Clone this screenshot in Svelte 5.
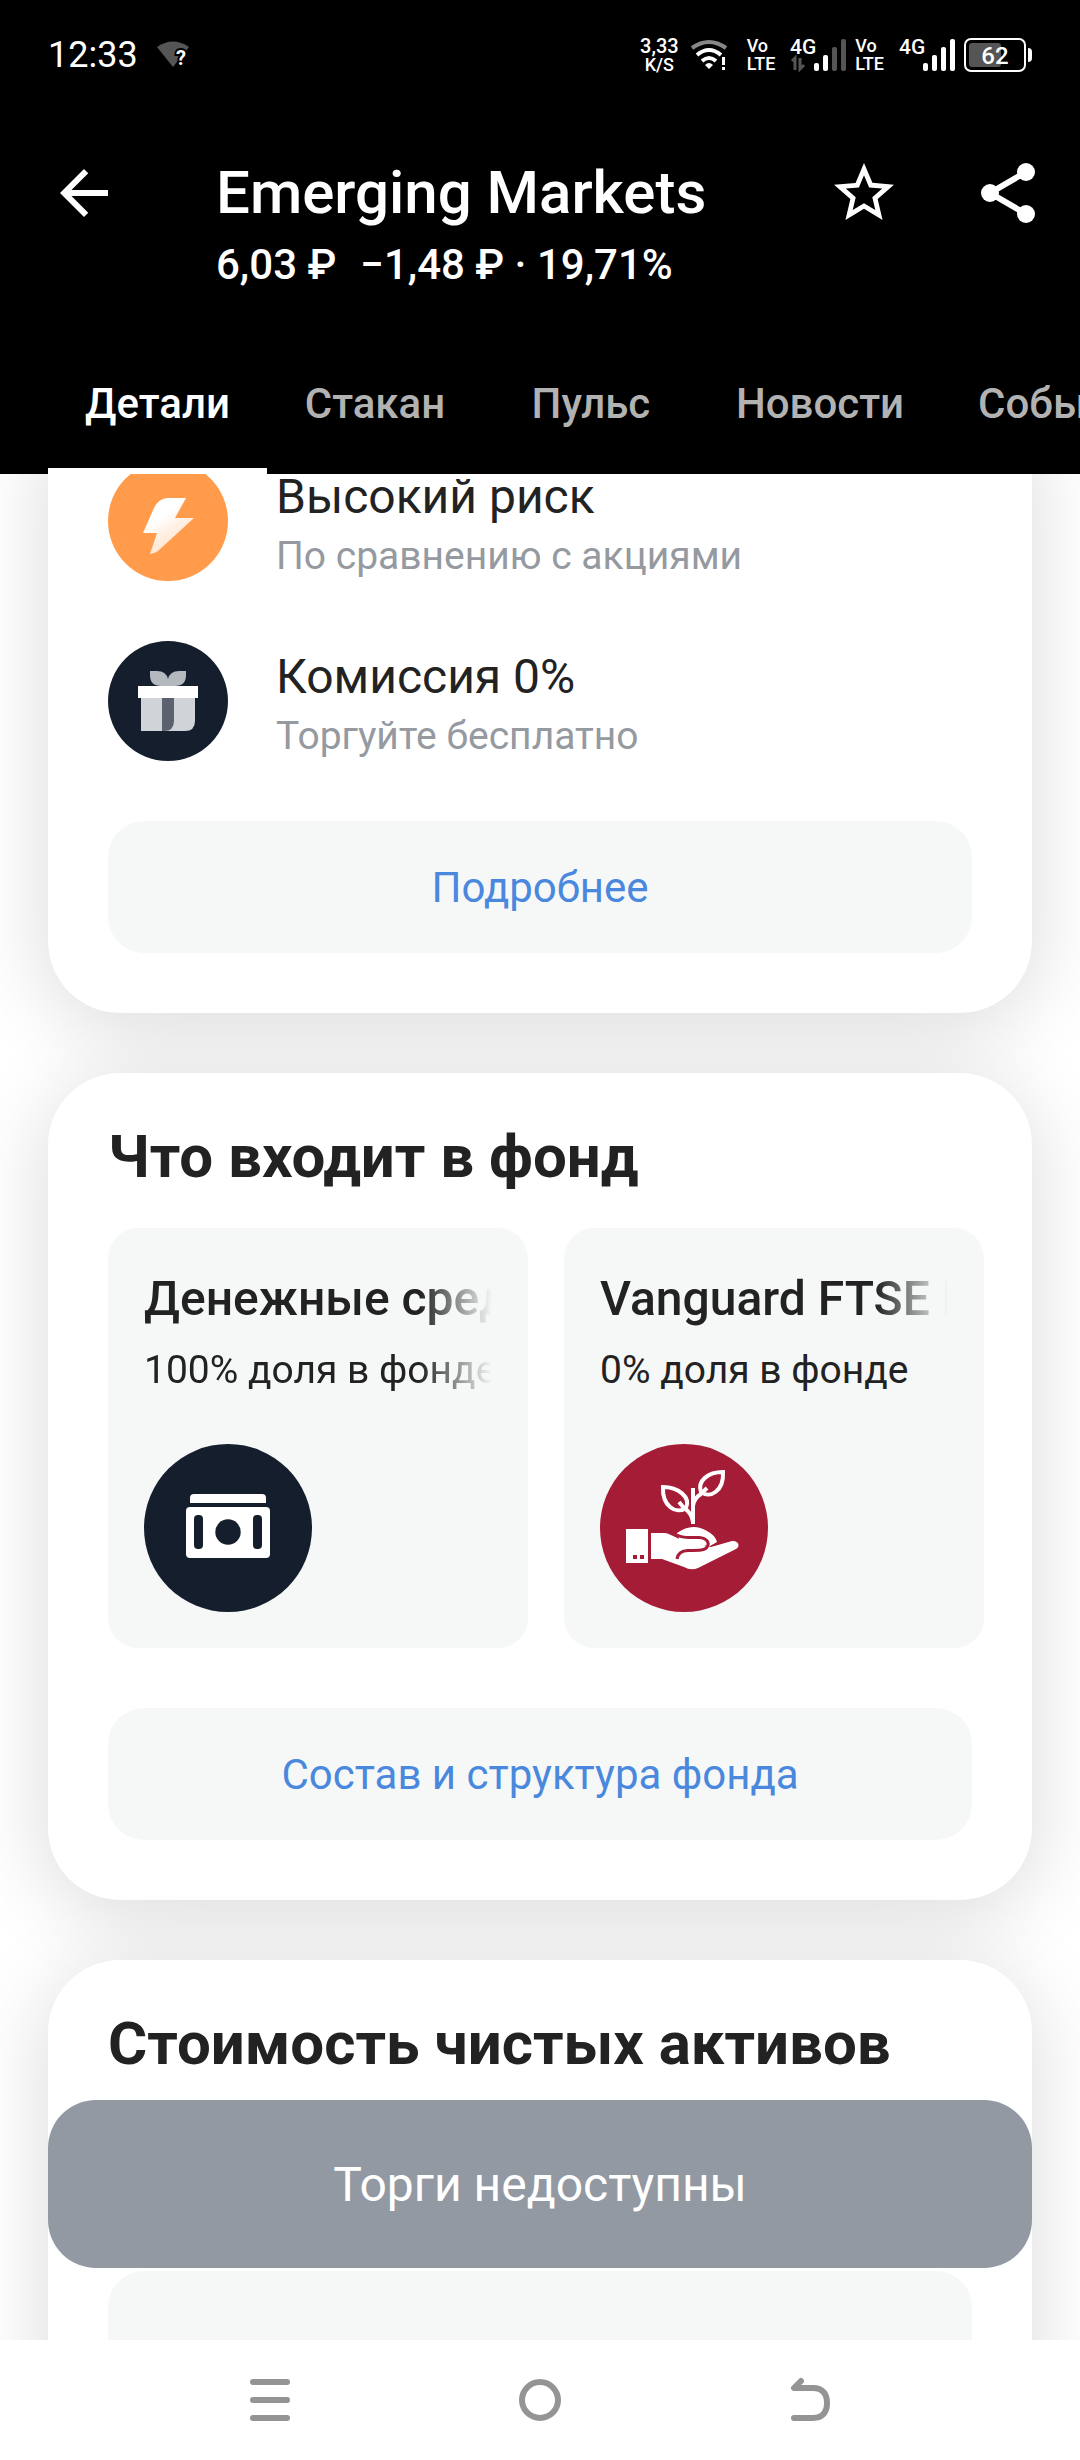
<script lang="ts">
    let activeTab = 'Детали';

    const tabs = ['Детали', 'Стакан', 'Пульс', 'Новости', 'События'];

    const assets = [
        { name: 'Денежные средства', share: '100% доля в фонде', longShare: true, icon: 'cash' },
        { name: 'Vanguard FTSE ETF', share: '0% доля в фонде', longShare: false, icon: 'plant' }
    ];

    // active bars out of four for each SIM card
    const sims = [
        { level: 2, data: true },
        { level: 4, data: false }
    ];
    const bars = [0, 1, 2, 3];
</script>

<div class="screen">
    <header>
        <div class="status-bar">
            <div class="status-left">
                <span class="clock">12:33</span>
                <svg width="34" height="28" viewBox="0 0 34 28" aria-hidden="true">
                    <path d="M0 6Q16 -5 32 6L16 26z" fill="#555" />
                    <text x="19" y="24" class="mark">?</text>
                </svg>
            </div>
            <div class="status-right">
                <div class="speed"><b>3,33</b><span>K/S</span></div>
                <svg width="50" height="36" viewBox="0 0 50 36" fill="none" stroke="#fff" stroke-width="4" aria-hidden="true">
                    <path d="M4 11Q21 -1 38 11" stroke="#888" />
                    <path d="M9 18Q21 8 33 18" />
                    <path d="M14 24Q21 18 28 24" />
                    <path d="M17 28Q21 24 25 28L21 32z" fill="#fff" stroke="none" />
                    <path d="M35.500 20V28M35.500 30V33" stroke-width="3" />
                </svg>
                {#each sims as sim}
                    <div class="volte"><span>Vo</span><span>LTE</span></div>
                    <svg width="62" height="36" viewBox="0 0 62 36" aria-hidden="true">
                        <text x="6" y="17" class="network">4G</text>
                        {#if sim.data}
                            <path d="M8 24L11 21V33M16 21V32L20 28" fill="none" stroke="#555" stroke-width="3" />
                        {/if}
                        {#each bars as i}
                            <rect
                                x={30 + i * 9}
                                y={26 - i * 8}
                                width="5"
                                height={8 + i * 8}
                                rx="2"
                                fill={i < sim.level ? '#fff' : '#555'}
                            />
                        {/each}
                    </svg>
                {/each}
                <svg width="68" height="36" viewBox="0 0 68 36" aria-hidden="true">
                    <rect x="1" y="2" width="60" height="32" rx="6" fill="none" stroke="#fff" stroke-width="2" />
                    <rect x="5" y="6" width="32" height="24" rx="3" fill="#555" />
                    <path d="M64 11Q68 11 68 15V21Q68 25 64 25z" fill="#fff" />
                    <text x="31" y="27" class="charge">62</text>
                </svg>
            </div>
        </div>

        <div class="toolbar">
            <button class="icon-button" aria-label="Назад">
                <svg viewBox="0 0 24 24"><path d="M20 11H7.830l5.590-5.590L12 4l-8 8 8 8 1.410-1.410L7.830 13H20z" /></svg>
            </button>
            <div class="title">
                <h1>Emerging Markets</h1>
                <p><span>6,03 ₽</span><span>−1,48 ₽ · 19,71%</span></p>
            </div>
            <div class="actions">
                <button class="icon-button" aria-label="В избранное">
                    <svg viewBox="0 0 24 24"><path d="M22 9.240l-7.190-.620L12 2 9.190 8.630 2 9.240l5.460 4.730L5.820 21 12 17.270 18.180 21l-1.630-7.030zM12 15.400l-3.760 2.270 1-4.280-3.320-2.880 4.380-.380L12 6.100l1.710 4.040 4.380.380-3.320 2.880 1 4.280z" /></svg>
                </button>
                <button class="icon-button" aria-label="Поделиться">
                    <svg viewBox="0 0 24 24">
                        <path d="M18 5L6 12L18 19" fill="none" stroke="#fff" stroke-width="2" />
                        <circle cx="18" cy="5" r="3" />
                        <circle cx="6" cy="12" r="3" />
                        <circle cx="18" cy="19" r="3" />
                    </svg>
                </button>
            </div>
        </div>

        <nav class="tabs">
            {#each tabs as tab}
                <button class:active={tab === activeTab} on:click={() => (activeTab = tab)}>{tab}</button>
            {/each}
        </nav>
    </header>

    <main>
        <div class="feed">
            <section class="card features">
                <div class="feature">
                    <svg class="round" viewBox="0 0 120 120" aria-hidden="true">
                        <defs>
                            <linearGradient id="bolt" x1="0" y1="0" x2="0.600" y2="1">
                                <stop offset="0.400" stop-color="#fff" />
                                <stop offset="1" stop-color="#ffdcc0" />
                            </linearGradient>
                        </defs>
                        <circle cx="60" cy="60" r="60" fill="#ff9b4a" />
                        <path d="M59 37H78L67 57H86L50 90Q46 93 42 93L49 72H35L46 47Q50 38 59 37z" fill="url(#bolt)" />
                    </svg>
                    <div class="feature-text">
                        <h3>Высокий риск</h3>
                        <p>По сравнению с акциями</p>
                    </div>
                </div>
                <div class="feature">
                    <svg class="round" viewBox="0 0 120 120" aria-hidden="true">
                        <circle cx="60" cy="60" r="60" fill="#151e2c" />
                        <path d="M42 30H49Q58 30 60 38Q62 30 71 30H78V34Q78 45 67 45H53Q42 45 42 34z" fill="#b4b8bf" />
                        <path d="M33 57H87V80Q87 90 77 90H33z" fill="#d0d3d7" />
                        <path d="M54 57H66V80Q66 90 56 90H54z" fill="#5b616d" />
                        <rect x="30" y="45" width="60" height="12" fill="#fff" />
                    </svg>
                    <div class="feature-text">
                        <h3>Комиссия 0%</h3>
                        <p>Торгуйте бесплатно</p>
                    </div>
                </div>
                <button class="more">Подробнее</button>
            </section>

            <section class="card">
                <h2>Что входит в фонд</h2>
                <div class="assets">
                    {#each assets as asset}
                        <article class="asset">
                            <h3 class="fade">{asset.name}</h3>
                            <p class:fade={asset.longShare}>{asset.share}</p>
                            {#if asset.icon === 'cash'}
                                <svg viewBox="0 0 168 168" aria-hidden="true">
                                    <circle cx="84" cy="84" r="84" fill="#151e2c" />
                                    <path d="M46 59V54Q46 50 50 50H118Q122 50 122 54V59z" fill="#fff" />
                                    <rect x="42" y="63" width="84" height="51" rx="4" fill="#fff" />
                                    <circle cx="84" cy="88" r="12.700" fill="#151e2c" />
                                    <rect x="50" y="71" width="9" height="34" rx="4" fill="#151e2c" />
                                    <rect x="109" y="71" width="9" height="34" rx="4" fill="#151e2c" />
                                </svg>
                            {:else}
                                <svg viewBox="0 0 168 168" aria-hidden="true">
                                    <circle cx="84" cy="84" r="84" fill="#a51c36" />
                                    <g fill="none" stroke="#fff" stroke-width="4">
                                        <path d="M93 44V80" />
                                        <path d="M63 43C78 43 91 53 86 64C76 71 62 62 63 43z" />
                                        <path d="M79 58L84 64Q92 69 93 78" />
                                        <path d="M123 28C108 28 97 37 101 48C110 55 124 47 123 28z" />
                                        <path d="M107 44L101 50Q94 54 93 62" />
                                    </g>
                                    <path d="M77 89Q92 78 107 87Q115 91 117 98L110 102L80 98z" fill="#fff" />
                                    <path d="M51 89H65C72 90 76 95 84 96L111 103L132 97C138 96 141 102 136 105L98 124Q91 127 84 123L62 115H51z" fill="#fff" />
                                    <path d="M77 91C84 95 90 93 99 93.500C107 94 110 99 107 103C105 106.500 100 106.500 88 106.500Q78 107 77 115" fill="none" stroke="#a51c36" stroke-width="3" />
                                    <rect x="26" y="85" width="22" height="34" fill="#fff" />
                                    <path d="M33 111h4v4h-4zM40 111h4v4h-4z" fill="#a51c36" />
                                </svg>
                            {/if}
                        </article>
                    {/each}
                </div>
                <button class="more">Состав и структура фонда</button>
            </section>

            <section class="card">
                <h2>Стоимость чистых активов</h2>
                <div class="value"></div>
                <div class="chart"></div>
            </section>
        </div>

        <button class="trade" disabled>Торги недоступны</button>
    </main>

    <footer>
        <button aria-label="Недавние">
            <svg viewBox="0 0 48 48"><path d="M7 6H41M7 24H41M7 42H41" /></svg>
        </button>
        <button aria-label="Домой">
            <svg viewBox="0 0 48 48"><circle cx="24" cy="24" r="18" /></svg>
        </button>
        <button aria-label="Назад">
            <svg viewBox="0 0 48 48"><path d="M15 5L8 12H27C37 12 41 18 41 27C41 36 37 42 27 42H8" /></svg>
        </button>
    </footer>
</div>

<style>
    :global(body) {
        margin: 0;
        background: #fff;
    }

    .screen {
        display: flex;
        flex-direction: column;
        height: 100vh;
        overflow: hidden;
        font-family: Roboto, "Liberation Sans", sans-serif;
        color: #222;
    }

    h1, h2, h3, p {
        margin: 0;
    }

    button {
        padding: 0;
        border: none;
        background: none;
        font-family: inherit;
        cursor: pointer;
    }

    header {
        flex: none;
        background: #000;
        color: #fff;
    }

    .status-bar {
        display: flex;
        justify-content: space-between;
        align-items: center;
        height: 109px;
        padding: 0 48px;
    }

    .status-bar svg {
        overflow: visible;
    }

    .status-left {
        display: flex;
        align-items: center;
        gap: 19px;
    }

    .clock {
        font-size: 36px;
        line-height: 44px;
    }

    .status-right {
        display: flex;
        align-items: center;
        gap: 9px;
    }

    .speed,
    .volte {
        display: flex;
        flex-direction: column;
        align-items: center;
        font-size: 18px;
        font-weight: 500;
        line-height: 18px;
    }

    .speed b {
        font-size: 20px;
        font-weight: 500;
        line-height: 20px;
    }

    .volte {
        align-items: flex-start;
    }

    .mark {
        fill: #fff;
        stroke: #000;
        stroke-width: 4px;
        paint-order: stroke;
        font-size: 20px;
        font-weight: 700;
    }

    .network {
        fill: #fff;
        font-size: 21px;
        font-weight: 500;
    }

    .charge {
        fill: #fff;
        font-size: 24px;
        font-weight: 500;
        text-anchor: middle;
    }

    .toolbar {
        display: flex;
        align-items: flex-start;
        padding: 48px 36px 43px 48px;
    }

    .icon-button {
        flex: none;
        width: 72px;
        height: 72px;
    }

    .icon-button svg {
        display: block;
        fill: #fff;
    }

    .title {
        flex: 1;
        margin-left: 96px;
    }

    .title h1 {
        font-size: 60px;
        font-weight: 500;
        line-height: 72px;
    }

    .title p {
        display: flex;
        gap: 24px;
        margin-top: 12px;
        font-size: 42px;
        font-weight: 500;
        line-height: 48px;
    }

    .actions {
        display: flex;
        gap: 72px;
    }

    .tabs {
        display: flex;
        height: 142px;
        padding-left: 48px;
        overflow: hidden;
    }

    .tabs button {
        flex: none;
        min-width: 216px;
        padding: 0 37px;
        border: solid transparent;
        border-width: 6px 0;
        color: #b2b2b2;
        font-size: 42px;
        font-weight: 500;
    }

    .tabs button.active {
        border-bottom-color: #fff;
        color: #fff;
    }

    main {
        position: relative;
        flex: 1;
        min-height: 0;
        overflow: hidden;
    }

    /* the feed is scrolled a little, so the first card starts under the header */
    .feed {
        display: flex;
        flex-direction: column;
        gap: 60px;
        margin-top: -73px;
        padding: 0 48px;
    }

    .card {
        padding: 48px 60px 60px;
        border-radius: 72px;
        background: #fff;
        box-shadow: 0 12px 84px rgba(0, 0, 0, 0.15);
    }

    .features {
        display: flex;
        flex-direction: column;
        gap: 60px;
        padding-top: 60px;
    }

    .feature {
        display: flex;
        gap: 48px;
    }

    .round {
        flex: none;
        width: 120px;
        height: 120px;
    }

    .feature-text {
        padding-top: 6px;
    }

    .feature-text h3 {
        font-size: 48px;
        font-weight: 400;
        line-height: 60px;
    }

    .feature-text p {
        margin-top: 5px;
        color: #9599a0;
        font-size: 39px;
        line-height: 48px;
    }

    .more {
        display: block;
        width: 100%;
        height: 132px;
        border-radius: 36px;
        background: #f6f8f8;
        color: #4a88dd;
        font-size: 42px;
    }

    .card h2 {
        font-size: 60px;
        font-weight: 700;
        line-height: 71px;
    }

    .assets {
        display: flex;
        gap: 36px;
        margin: 36px -60px 60px 0;
        overflow: hidden;
    }

    .asset {
        display: flex;
        flex: none;
        flex-direction: column;
        box-sizing: border-box;
        width: 420px;
        height: 420px;
        padding: 41px 36px 36px;
        border-radius: 30px;
        background: #f6f8f8;
        white-space: nowrap;
    }

    .asset h3 {
        font-size: 48px;
        font-weight: 500;
        line-height: 60px;
    }

    .asset p {
        margin-top: 17px;
        font-size: 39px;
        line-height: 48px;
    }

    .asset svg {
        width: 168px;
        height: 168px;
        margin-top: auto;
    }

    .fade {
        overflow: hidden;
        mask-image: linear-gradient(to right, #000 calc(100% - 72px), transparent);
    }

    .value {
        height: 96px;
        margin: 36px 0 60px;
    }

    .chart {
        height: 132px;
        border-radius: 36px;
        background: #f6f8f8;
    }

    .trade {
        position: absolute;
        right: 48px;
        bottom: 72px;
        left: 48px;
        height: 168px;
        border-radius: 48px;
        background: #9299a3;
        color: #fff;
        font-size: 48px;
    }

    footer {
        display: flex;
        flex: none;
        justify-content: center;
        gap: 222px;
        height: 120px;
        background: #fff;
    }

    footer svg {
        display: block;
        width: 48px;
        height: 48px;
        fill: none;
        stroke: #949494;
        stroke-width: 6px;
        stroke-linecap: round;
        stroke-linejoin: round;
    }
</style>
